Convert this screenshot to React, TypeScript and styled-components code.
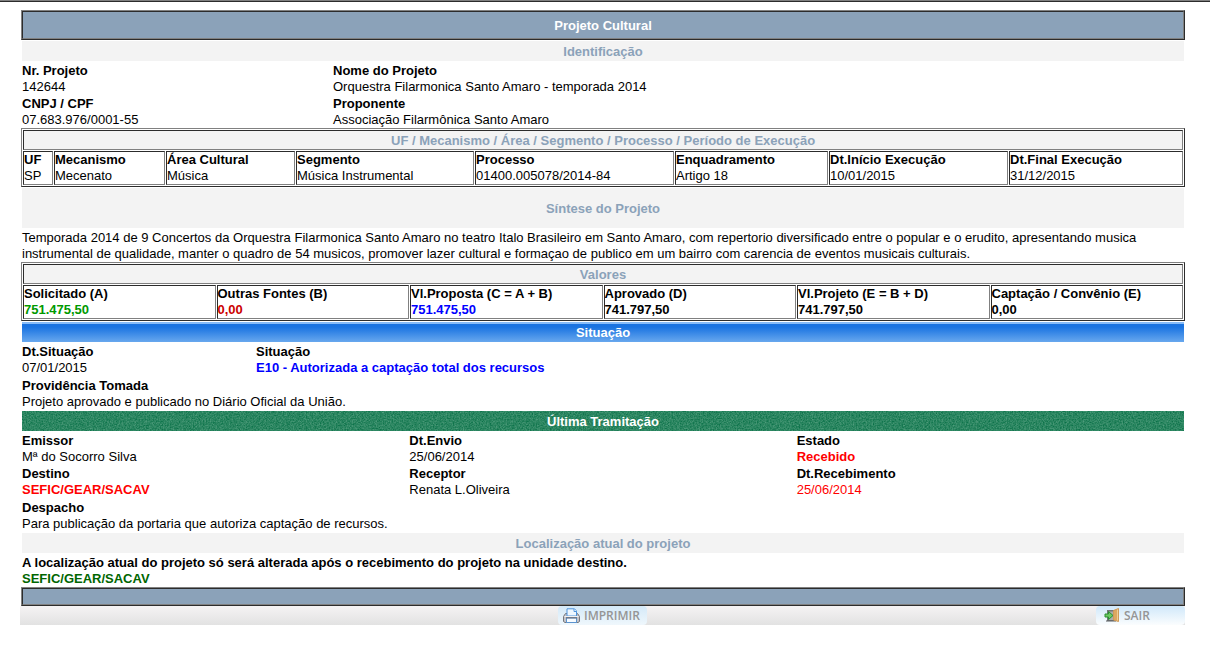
import React from "react";
import styled, { createGlobalStyle } from "styled-components";

const GlobalStyle = createGlobalStyle`
  *, *::before, *::after { box-sizing: border-box; }
  body {
    margin: 0;
    background: #fff;
    color: #000;
    font-family: "Liberation Sans", Arial, sans-serif;
    font-size: 13px;
    line-height: 16px;
  }
`;

const edgeLight = "#808080";
const edgeDark = "#2c2c2c";
const steel = "#8ba2b9";

const TopRule = styled.div`
  height: 2px;
  margin-bottom: 8px;
  background: ${edgeLight};
  border-bottom: 1px solid ${edgeDark};
`;

const Page = styled.main`
  padding: 0 25px 24px 20px;
`;

const Content = styled.div`
  padding-left: 1px;
`;

const Frame = styled.div`
  border: 1px solid;
  border-color: ${edgeLight} ${edgeDark} ${edgeDark} ${edgeLight};
`;

const Bar = styled.div<{ $height: number }>`
  display: flex;
  align-items: center;
  justify-content: center;
  height: ${(p) => p.$height}px;
  padding-top: 2px;
  border: 1px solid;
  border-color: ${edgeDark} ${edgeLight} ${edgeLight} ${edgeDark};
  background: ${steel};
  color: #fff;
`;

const Title = styled.h1`
  margin: 0;
  font-size: 13px;
  line-height: 16px;
`;

type Tone = "plain" | "blue" | "green";

const sectionFill: Record<Tone, string> = {
  plain: "#f3f3f3",
  blue: "linear-gradient(#86bbf8 0 2px, #1a73e1 2px, #1a73e1 5px, #68a8ee 100%)",
  green: "#28845f",
};

const Section = styled.h2<{ $tone?: Tone; $tall?: boolean }>`
  position: relative;
  display: flex;
  align-items: center;
  justify-content: center;
  height: ${(p) => (p.$tall ? 40 : 20)}px;
  margin: 1px 1px 0;
  padding-top: 2px;
  background: ${(p) => sectionFill[p.$tone ?? "plain"]};
  color: ${(p) => (p.$tone && p.$tone !== "plain" ? "#fff" : steel)};
  font-size: 13px;
  line-height: 16px;
`;

const SectionText = styled.span`
  position: relative;
`;

const Grain = styled.svg`
  position: absolute;
  inset: 0;
  width: 100%;
  height: 100%;
`;

const Fields = styled.dl<{ $columns?: string }>`
  display: grid;
  grid-template-columns: ${(p) => p.$columns ?? "1fr"};
  row-gap: 1px;
  margin: 0 1px;
  padding-top: 2px;
`;

const Term = styled.dt`
  font-weight: bold;
`;

const Detail = styled.dd<{ $color?: string; $bold?: boolean }>`
  margin: 0;
  color: ${(p) => p.$color ?? "#000"};
  font-weight: ${(p) => (p.$bold ? "bold" : "normal")};
`;

const Summary = styled.p`
  margin: 0 1px;
  padding-top: 2px;
`;

const Grid = styled.table`
  width: 100%;
  table-layout: fixed;
  border: 1px solid;
  border-color: ${edgeLight} ${edgeDark} ${edgeDark} ${edgeLight};
  border-collapse: separate;
  border-spacing: 1px;
`;

const HeadCell = styled.th`
  height: 20px;
  padding: 2px 0 0;
  border: 1px solid;
  border-color: ${edgeDark} ${edgeLight} ${edgeLight} ${edgeDark};
  background: #f3f3f3;
  color: ${steel};
`;

const Cell = styled.td`
  padding: 0;
  border: 1px solid;
  border-color: ${edgeDark} ${edgeLight} ${edgeLight} ${edgeDark};
`;

const CellLabel = styled.strong`
  display: block;
`;

const CellValue = styled.span<{ $color?: string; $bold?: boolean }>`
  display: block;
  color: ${(p) => p.$color ?? "#000"};
  font-weight: ${(p) => (p.$bold ? "bold" : "normal")};
`;

const Footer = styled.footer`
  display: grid;
  grid-template-columns: 1fr auto 1fr;
  height: 19px;
  background: linear-gradient(#f5f3f4, #e2e2e2);
`;

const Action = styled.button<{ $end?: boolean }>`
  grid-column: ${(p) => (p.$end ? 3 : 2)};
  justify-self: ${(p) => (p.$end ? "end" : "center")};
  display: flex;
  align-items: center;
  gap: 4px;
  width: 89px;
  height: 19px;
  padding: 0 0 0 ${(p) => (p.$end ? 8 : 5)}px;
  border: 0;
  border-radius: 4px;
  background: linear-gradient(${(p) => (p.$end ? "#d0e8fa, #fbfdfe" : "#d4e9f8, #eff7fc")});
  color: #959595;
  font: 600 12px/16px "Open Sans", sans-serif;
  cursor: pointer;
`;

const PrinterIcon = () => (
  <svg width="17" height="16" viewBox="0 0 17 16" aria-hidden="true">
    <path d="M2.500 5.500L.5 8.500v5l1.500 1h13l1.500-1v-5l-2-3z" fill="#c4c4c9" stroke="#77777c" />
    <path d="M4 8V.8h7.500L13.500 3v5z" fill="#eef7ff" stroke="#4f94dc" />
    <path d="M11 1v2.500h2.500" fill="#fff" stroke="#4f94dc" />
    <path d="M1.500 8.500h14" stroke="#f2f2f4" />
    <path d="M3.500 10h10v4.500h-10z" fill="#f7fbff" stroke="#5b93cf" />
    <path d="M3 9.800h11" stroke="#66666b" />
  </svg>
);

const ExitIcon = () => (
  <svg width="16" height="15" viewBox="0 0 16 15" aria-hidden="true">
    <path d="M3 2h8v11H3z" fill="#737679" />
    <path d="M4.500 3.500H10V12H4.500z" fill="#a9abad" />
    <path d="M2 13h10" stroke="#5d5e60" />
    <path d="M9.500 2.500L14.500.5v13l-5-1.500z" fill="#dca761" stroke="#cf9a58" />
    <path d="M13.500 1.500v11" stroke="#f0cd94" />
    <path d="M1 6h3.500V3.500L9 7.500l-4.500 4V9H1z" fill="#6ccb62" stroke="#2b8f33" />
  </svg>
);

interface Entry {
  label: string;
  value: string;
  color?: string;
  bold?: boolean;
}

const FieldList = ({ items, columns }: { items: Entry[]; columns?: string }) => (
  <Fields $columns={columns}>
    {items.map((item) => (
      <div key={item.label}>
        <Term>{item.label}</Term>
        <Detail $color={item.color} $bold={item.bold}>{item.value}</Detail>
      </div>
    ))}
  </Fields>
);

const DataTable = ({ title, items, widths }: { title: string; items: Entry[]; widths?: number[] }) => (
  <Grid>
    {widths && (
      <colgroup>
        {widths.map((width, i) => <col key={i} width={width} />)}
      </colgroup>
    )}
    <thead>
      <tr><HeadCell colSpan={items.length}>{title}</HeadCell></tr>
    </thead>
    <tbody>
      <tr>
        {items.map((item) => (
          <Cell key={item.label}>
            <CellLabel>{item.label}</CellLabel>
            <CellValue $color={item.color} $bold={item.bold}>{item.value}</CellValue>
          </Cell>
        ))}
      </tr>
    </tbody>
  </Grid>
);

const identification: Entry[] = [
  { label: "Nr. Projeto", value: "142644" },
  { label: "Nome do Projeto", value: "Orquestra Filarmonica Santo Amaro - temporada 2014" },
  { label: "CNPJ / CPF", value: "07.683.976/0001-55" },
  { label: "Proponente", value: "Associação Filarmônica Santo Amaro" },
];

const classification: Entry[] = [
  { label: "UF", value: "SP" },
  { label: "Mecanismo", value: "Mecenato" },
  { label: "Área Cultural", value: "Música" },
  { label: "Segmento", value: "Música Instrumental" },
  { label: "Processo", value: "01400.005078/2014-84" },
  { label: "Enquadramento", value: "Artigo 18" },
  { label: "Dt.Início Execução", value: "10/01/2015" },
  { label: "Dt.Final Execução", value: "31/12/2015" },
];

const amounts: Entry[] = [
  { label: "Solicitado (A)", value: "751.475,50", color: "#009900", bold: true },
  { label: "Outras Fontes (B)", value: "0,00", color: "#cc0000", bold: true },
  { label: "Vl.Proposta (C = A + B)", value: "751.475,50", color: "#0000ff", bold: true },
  { label: "Aprovado (D)", value: "741.797,50", bold: true },
  { label: "Vl.Projeto (E = B + D)", value: "741.797,50", bold: true },
  { label: "Captação / Convênio (E)", value: "0,00", bold: true },
];

const status: Entry[] = [
  { label: "Dt.Situação", value: "07/01/2015" },
  { label: "Situação", value: "E10 - Autorizada a captação total dos recursos", color: "#0000ff", bold: true },
];

const routing: Entry[] = [
  { label: "Emissor", value: "Mª do Socorro Silva" },
  { label: "Dt.Envio", value: "25/06/2014" },
  { label: "Estado", value: "Recebido", color: "#ff0000", bold: true },
  { label: "Destino", value: "SEFIC/GEAR/SACAV", color: "#ff0000", bold: true },
  { label: "Receptor", value: "Renata L.Oliveira" },
  { label: "Dt.Recebimento", value: "25/06/2014", color: "#ff0000" },
];

export default function App() {
  return (
    <>
      <GlobalStyle />
      <TopRule />
      <Page>
        <Content>
          <Frame><Bar $height={28}><Title>Projeto Cultural</Title></Bar></Frame>

          <Section>Identificação</Section>
          <FieldList items={identification} columns="311fr 851fr" />
          <DataTable
            title="UF / Mecanismo / Área / Segmento / Processo / Período de Execução"
            items={classification}
            widths={[30, 111, 129, 178, 199, 153, 179, 174]}
          />

          <Section $tall>Síntese do Projeto</Section>
          <Summary>
            Temporada 2014 de 9 Concertos da Orquestra Filarmonica Santo Amaro no teatro Italo
            Brasileiro em Santo Amaro, com repertorio diversificado entre o popular e o erudito,
            apresentando musica instrumental de qualidade, manter o quadro de 54 musicos, promover
            lazer cultural e formaçao de publico em um bairro com carencia de eventos musicais
            culturais.
          </Summary>
          <DataTable title="Valores" items={amounts} />

          <Section $tone="blue">Situação</Section>
          <FieldList items={status} columns="234fr 928fr" />
          <FieldList items={[{ label: "Providência Tomada", value: "Projeto aprovado e publicado no Diário Oficial da União." }]} />

          <Section $tone="green">
            <Grain aria-hidden="true">
              <filter id="grain" x="0" y="0" width="100%" height="100%" colorInterpolationFilters="sRGB">
                <feTurbulence type="fractalNoise" baseFrequency="0.7" numOctaves="3" seed="4" />
                <feColorMatrix
                  values="0.4 0 0 0 -0.03
                          0.25 0 0 0 0.4
                          0.3 0 0 0 0.23
                          0 0 0 0 1"
                />
              </filter>
              <rect width="100%" height="100%" filter="url(#grain)" />
            </Grain>
            <SectionText>Última Tramitação</SectionText>
          </Section>
          <FieldList items={routing} columns="repeat(3, 1fr)" />
          <FieldList items={[{ label: "Despacho", value: "Para publicação da portaria que autoriza captação de recursos." }]} />

          <Section>Localização atual do projeto</Section>
          <FieldList
            items={[{
              label: "A localização atual do projeto só será alterada após o recebimento do projeto na unidade destino.",
              value: "SEFIC/GEAR/SACAV",
              color: "#006600",
              bold: true,
            }]}
          />
          <Frame><Bar $height={17} /></Frame>
        </Content>
        <Footer>
          <Action type="button"><PrinterIcon />IMPRIMIR</Action>
          <Action type="button" $end><ExitIcon />SAIR</Action>
        </Footer>
      </Page>
    </>
  );
}
